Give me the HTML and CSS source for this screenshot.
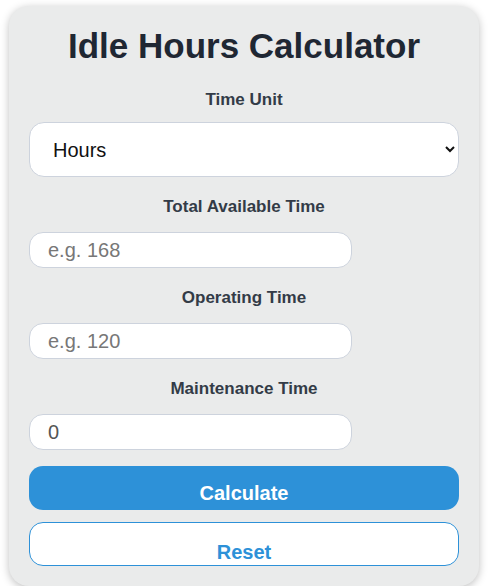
FILE: index.html
```html
<!DOCTYPE html>
<html lang="en">

<head>
    <meta charset="UTF-8">
    <meta name="viewport" content="width=device-width, initial-scale=1.0">
    <title>Idle Hours Calculator</title>
    <link rel="stylesheet" href="styles.css">
</head>

<body>
    <div class="calculator">
        <h1 class="title">Idle Hours Calculator</h1>

        <div class="field">
            <label for="time-unit">Time Unit</label>
            <select id="time-unit" class="unit-select">
                <option>Hours</option>
                <option>Minutes</option>
                <option>Days</option>
            </select>
        </div>

        <div class="field">
            <label for="total-time">Total Available Time</label>
            <input type="number" id="total-time" class="time-input" placeholder="e.g. 168">
        </div>

        <div class="field">
            <label for="operating-time">Operating Time</label>
            <input type="number" id="operating-time" class="time-input" placeholder="e.g. 120">
        </div>

        <div class="field">
            <label for="maintenance-time">Maintenance Time</label>
            <input type="number" id="maintenance-time" class="time-input" value="0">
        </div>

        <button class="btn btn-calculate">Calculate</button>
        <button class="btn btn-reset">Reset</button>
    </div>
</body>

</html>
```

FILE: styles.css
```css
body {
    font-family: "Liberation Sans", Arial, sans-serif;
    background-color: #FFFFFF;
    margin: 0;
    padding: 6px 0 0 9px;
}

.calculator {
    width: 470px;
    box-sizing: border-box;
    background-color: #EAEBEB;
    border-radius: 20px;
    padding: 20px;
    box-shadow: 0 2px 8px rgba(0, 0, 0, 0.25);
}

.title {
    font-size: 35px;
    font-weight: bold;
    color: #1F2733;
    text-align: center;
    margin: 0 0 24px 0;
}

.field + .field {
    margin-top: 20px;
}

.field label {
    display: block;
    font-size: 17px;
    line-height: 20px;
    font-weight: bold;
    color: #333B47;
    text-align: center;
    margin-bottom: 12px;
}

.unit-select {
    display: block;
    width: 100%;
    height: 55px;
    box-sizing: border-box;
    padding: 0 12px 0 19px;
    font-family: "Liberation Sans", Arial, sans-serif;
    font-size: 20px;
    color: #111111;
    background-color: #FFFFFF;
    border: 1px solid #CDD3DD;
    border-radius: 15px;
}

.time-input {
    display: block;
    width: 75%;
    height: 36px;
    box-sizing: border-box;
    padding: 0 18px;
    font-family: "Liberation Sans", Arial, sans-serif;
    font-size: 20px;
    color: #555555;
    background-color: #FFFFFF;
    border: 1px solid #CDD3DD;
    border-radius: 14px;
}

.field label + .time-input {
    margin-top: 15px;
}

.time-input::placeholder {
    color: #777777;
}

.time-input::-webkit-outer-spin-button,
.time-input::-webkit-inner-spin-button {
    -webkit-appearance: none;
    margin: 0;
}

.btn {
    display: block;
    width: 100%;
    box-sizing: border-box;
    font-family: "Liberation Sans", Arial, sans-serif;
    font-size: 20px;
    font-weight: bold;
    line-height: 23px;
    border-radius: 14px;
    cursor: pointer;
}

.btn-calculate {
    height: 44px;
    margin-top: 16px;
    padding: 16px 0 5px;
    color: #FFFFFF;
    background-color: #2D91D8;
    border: none;
}

.btn-reset {
    height: 44px;
    margin-top: 12px;
    padding: 18px 0 1px;
    color: #2D91D8;
    background-color: #FFFFFF;
    border: 1px solid #2D91D8;
}
```
